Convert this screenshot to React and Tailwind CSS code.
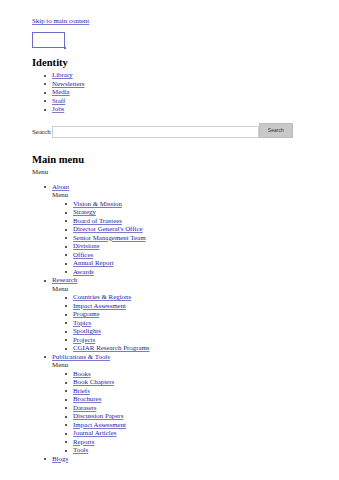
import React from "react";

const identity = ["Library", "Newsletters", "Media", "Staff", "Jobs"];

const menu = [
  {
    title: "About",
    items: ["Vision & Mission", "Strategy", "Board of Trustees", "Director General's Office", "Senior Management Team", "Divisions", "Offices", "Annual Report", "Awards"],
  },
  {
    title: "Research",
    items: ["Countries & Regions", "Impact Assessment", "Programs", "Topics", "Spotlights", "Projects", "CGIAR Research Programs"],
  },
  {
    title: "Publications & Tools",
    items: ["Books", "Book Chapters", "Briefs", "Brochures", "Datasets", "Discussion Papers", "Impact Assessment", "Journal Articles", "Reports", "Tools"],
  },
  { title: "Blogs", items: [] },
];

const bullet =
  "relative before:content-[''] before:absolute before:left-[-8px] before:top-[3.5px] before:w-[2px] before:h-[2px] before:rounded-full before:bg-[#222]";

function A({ children }) {
  return (
    <a href="#" className="text-[#2323ad] underline decoration-[#7a7acc] underline-offset-[1px]">
      {children}
    </a>
  );
}

export default function App() {
  return (
    <div className="min-h-screen bg-white text-[#222] font-['Liberation_Serif',serif] text-[6.9px] leading-[8.5px] pl-[32px] pt-[17px]">
      {/* Skip link */}
      <div><A>Skip to main content</A></div>

      {/* Logo link box */}
      <div className="mt-[6.5px] relative w-[34px] h-[17px]">
        <div className="w-[33px] h-[16px] border border-[#6a6acc]"></div>
        <div className="absolute right-0 bottom-0 w-[2px] h-[2px] bg-[#6a6acc]"></div>
      </div>

      {/* Identity */}
      <h2 className="mt-[7px] text-[10.6px] leading-[13px] font-bold text-black">Identity</h2>
      <ul className="mt-[2px] pl-[20px]">
        {identity.map((t) => (
          <li key={t} className={bullet}><A>{t}</A></li>
        ))}
      </ul>

      {/* Search */}
      <div className="mt-[9px] flex items-end">
        <label className="leading-[8px] mb-[2px]">Search</label>
        <div className="ml-[1px] w-[207px] h-[12px] border border-[#cfcfcf] bg-white"></div>
        <button className="w-[34px] h-[15px] bg-[#c9c9c9] border border-[#bdbdbd] font-['Liberation_Sans',sans-serif] text-[5px] leading-[5px] text-[#333]">
          Search
        </button>
      </div>

      {/* Main menu */}
      <h2 className="mt-[15px] text-[10.6px] leading-[13px] font-bold text-black">Main menu</h2>
      <div className="mt-[2px]">Menu</div>
      <ul className="mt-[6.5px] pl-[20px]">
        {menu.map((m) => (
          <li key={m.title} className={bullet}>
            <A>{m.title}</A>
            {m.items.length > 0 && (
              <>
                <div>Menu</div>
                <ul className="pl-[21px]">
                  {m.items.map((t) => (
                    <li key={t} className={bullet}><A>{t}</A></li>
                  ))}
                </ul>
              </>
            )}
          </li>
        ))}
      </ul>
    </div>
  );
}
